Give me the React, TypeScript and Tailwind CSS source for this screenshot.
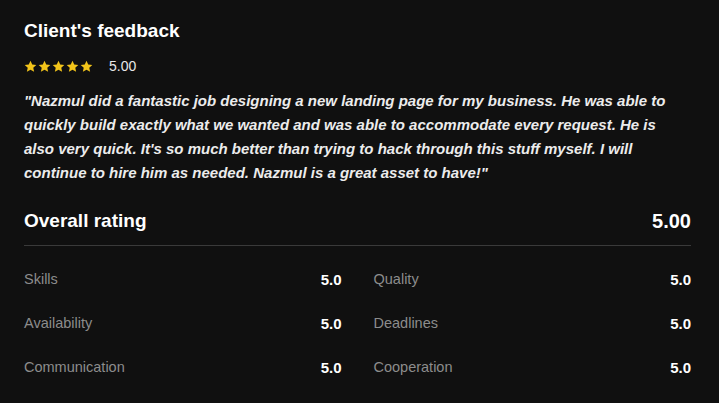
import React from "react";

const Star = () => (
  <svg width="13" height="13" viewBox="0 0 24 24" className="shrink-0">
    <path
      fill="#f2c41a"
      d="M12 1.5l3.2 6.9 7.5.8-5.6 5.1 1.6 7.4L12 17.9l-6.7 3.8 1.6-7.4L1.3 9.2l7.5-.8z"
    />
  </svg>
);

const rows: [string, string, string, string][] = [
  ["Skills", "5.0", "Quality", "5.0"],
  ["Availability", "5.0", "Deadlines", "5.0"],
  ["Communication", "5.0", "Cooperation", "5.0"],
];

export default function App() {
  return (
    <div
      className="w-[719px] h-[403px] bg-[#101010] text-white pl-6 pr-[28px] pt-[18px] overflow-hidden"
      style={{ fontFamily: '"Liberation Sans", Arial, sans-serif' }}
    >
      <h2 className="text-[19px] leading-[26px] font-bold">Client's feedback</h2>
      <div className="flex items-center mt-[15px] h-[14px]">
        <div className="flex gap-[1px]">
          <Star />
          <Star />
          <Star />
          <Star />
          <Star />
        </div>
        <span className="ml-[16px] text-[14px] text-[#e8e8e8]">5.00</span>
      </div>
      <p className="mt-[16px] text-[15px] leading-[24px] italic font-bold text-[#ececec] pr-[8px]">
        "Nazmul did a fantastic job designing a new landing page for my business. He was able to
        quickly build exactly what we wanted and was able to accommodate every request. He is also
        very quick. It's so much better than trying to hack through this stuff myself. I will continue
        to hire him as needed. Nazmul is a great asset to have!"
      </p>
      <div className="flex justify-between items-center mt-[23px] pb-[11px] border-b border-[#3a3a3a]">
        <span className="text-[19px] leading-[26px] font-bold">Overall rating</span>
        <span className="text-[20px] leading-[26px] font-bold">5.00</span>
      </div>
      <div className="grid grid-cols-2 gap-x-8 mt-[25px] gap-y-[26px]">
        {rows.map(([a, av, b, bv]) => (
          <React.Fragment key={a}>
            <div className="flex justify-between items-center h-[18px]">
              <span className="text-[14.5px] text-[#8c8c8c]">{a}</span>
              <span className="text-[15px] font-bold text-white">{av}</span>
            </div>
            <div className="flex justify-between items-center h-[18px]">
              <span className="text-[14.5px] text-[#8c8c8c]">{b}</span>
              <span className="text-[15px] font-bold text-white">{bv}</span>
            </div>
          </React.Fragment>
        ))}
      </div>
    </div>
  );
}
